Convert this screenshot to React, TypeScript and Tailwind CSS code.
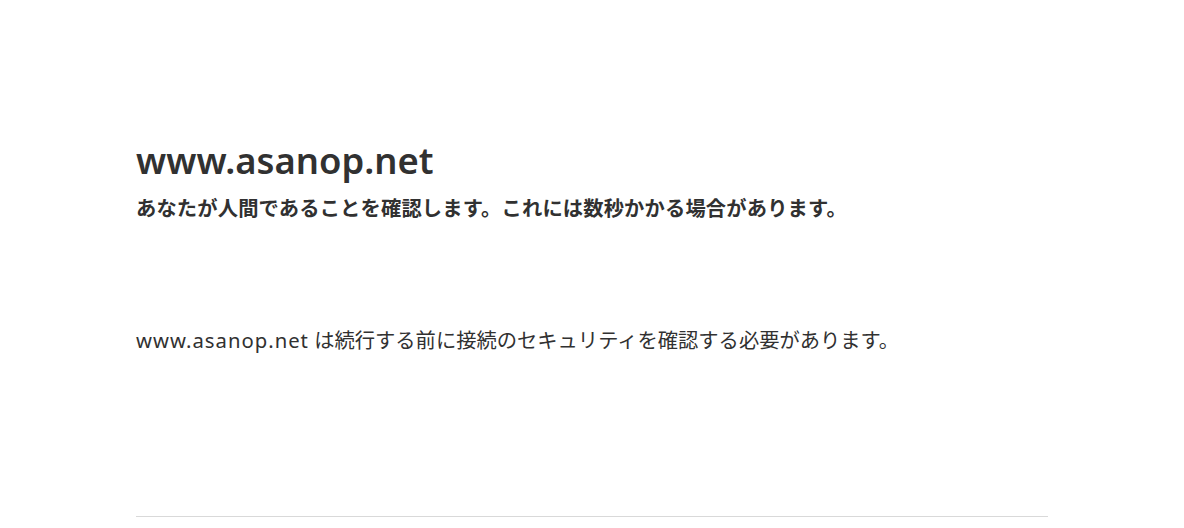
export default function App() {
  return (
    <div
      className="min-h-screen bg-white text-[#313131]"
      style={{ fontFamily: '"Noto Sans", "Noto Sans CJK JP", sans-serif' }}
    >
      <div className="mx-auto max-w-[60rem] px-6 pt-[130px]">
        <h1 className="text-[36.4px] font-semibold leading-[60px]">www.asanop.net</h1>
        <h2 className="text-[20.3px] font-bold leading-9 tracking-[0.15px]">
          あなたが人間であることを確認します。これには数秒かかる場合があります。
        </h2>
        <p className="mt-[99px] text-[20.3px] leading-[30px]">
          <span className="tracking-[1px]">www.asanop.net</span> は続行する前に接続のセキュリティを確認する必要があります。
        </p>
        <div className="mt-[161px] border-t border-[#d9d9d9]" />
      </div>
    </div>
  );
}
